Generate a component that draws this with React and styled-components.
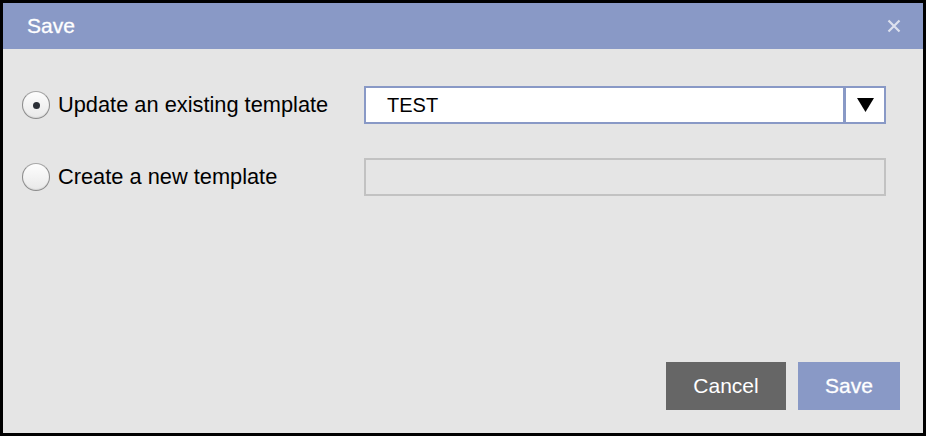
import React, { useState } from 'react'
import styled, { createGlobalStyle } from 'styled-components'

const GlobalStyle = createGlobalStyle`
  html, body {
    margin: 0;
    padding: 0;
    background: #000;
  }
  body {
    font-family: 'Liberation Sans', Arial, Helvetica, sans-serif;
  }
`

const Dialog = styled.div`
  box-sizing: border-box;
  width: 926px;
  height: 436px;
  border: 3px solid #000;
  background: #e5e5e5;
  display: flex;
  flex-direction: column;
`

const Header = styled.div`
  height: 46px;
  background: #8999c6;
  display: flex;
  align-items: center;
  justify-content: space-between;
  padding: 0 21px 0 24px;
`

const Title = styled.h2`
  margin: 0;
  color: #fff;
  font-size: 21px;
  font-weight: normal;
  -webkit-text-stroke: 0.3px #fff;
`

const Close = styled.button`
  border: 0;
  background: none;
  padding: 0;
  width: 16px;
  height: 16px;
  display: flex;
  cursor: pointer;
`

const Body = styled.div`
  flex: 1;
  display: grid;
  grid-template-columns: 342px 1fr;
  grid-auto-rows: 38px;
  row-gap: 34px;
  align-content: start;
  padding: 37px 37px 0 19px;
`

const Option = styled.label`
  display: flex;
  align-items: center;
  gap: 8px;
  font-size: 21.8px;
  color: #000;
  cursor: pointer;
`

const Radio = styled.span`
  box-sizing: border-box;
  width: 28px;
  height: 28px;
  border-radius: 50%;
  border: 1px solid #8c8c8c;
  border-top-color: #a8a8a8;
  background: linear-gradient(#fdfdfd, #e9e9e9);
  box-shadow: inset 0 -1px 1px rgba(0, 0, 0, 0.08);
  display: flex;
  align-items: center;
  justify-content: center;
  &::after {
    content: '';
    width: 7px;
    height: 7px;
    border-radius: 50%;
    background: ${(p) => (p.$checked ? '#2b2f36' : 'transparent')};
  }
`

const Select = styled.div`
  box-sizing: border-box;
  height: 38px;
  border: 2px solid #8999c6;
  background: #fff;
  display: flex;
  align-items: stretch;
`

const SelectValue = styled.div`
  flex: 1;
  display: flex;
  align-items: center;
  padding-left: 21px;
  font-size: 20px;
  color: #000;
`

const SelectArrow = styled.div`
  width: 38px;
  border-left: 3px solid #8999c6;
  display: flex;
  align-items: center;
  justify-content: center;
`

const TextInput = styled.input`
  box-sizing: border-box;
  height: 38px;
  width: 100%;
  border: 2px solid #c2c2c2;
  background: #e5e5e5;
  font: inherit;
  font-size: 20px;
  outline: none;
`

const Footer = styled.div`
  display: flex;
  justify-content: flex-end;
  gap: 12px;
  padding: 0 23px 23px 0;
`

const Button = styled.button`
  height: 48px;
  width: ${(p) => p.$width}px;
  border: 0;
  background: ${(p) => (p.$primary ? '#8999c6' : '#666666')};
  color: #fff;
  font-family: inherit;
  font-size: 21px;
  -webkit-text-stroke: ${(p) => (p.$primary ? '0.3px #fff' : '0')};
  cursor: pointer;
`

export default function App() {
  const [mode, setMode] = useState('update')

  return (
    <>
      <GlobalStyle />
      <Dialog>
        <Header>
          <Title>Save</Title>
          <Close aria-label='Close'>
            <svg width='16' height='16' viewBox='0 0 16 16'>
              <path
                d='M2.5 2.5 L13.5 13.5 M13.5 2.5 L2.5 13.5'
                stroke='#dde1ee'
                strokeWidth='2.2'
              />
            </svg>
          </Close>
        </Header>
        <Body>
          <Option onClick={() => setMode('update')}>
            <Radio $checked={mode === 'update'} />
            Update an existing template
          </Option>
          <Select>
            <SelectValue>TEST</SelectValue>
            <SelectArrow>
              <svg width='17' height='14' viewBox='0 0 17 14'>
                <polygon points='0,0 17,0 8.5,14' fill='#000' />
              </svg>
            </SelectArrow>
          </Select>
          <Option onClick={() => setMode('create')}>
            <Radio $checked={mode === 'create'} />
            Create a new template
          </Option>
          <TextInput disabled={mode !== 'create'} />
        </Body>
        <Footer>
          <Button $width={120}>Cancel</Button>
          <Button $width={102} $primary>
            Save
          </Button>
        </Footer>
      </Dialog>
    </>
  )
}
